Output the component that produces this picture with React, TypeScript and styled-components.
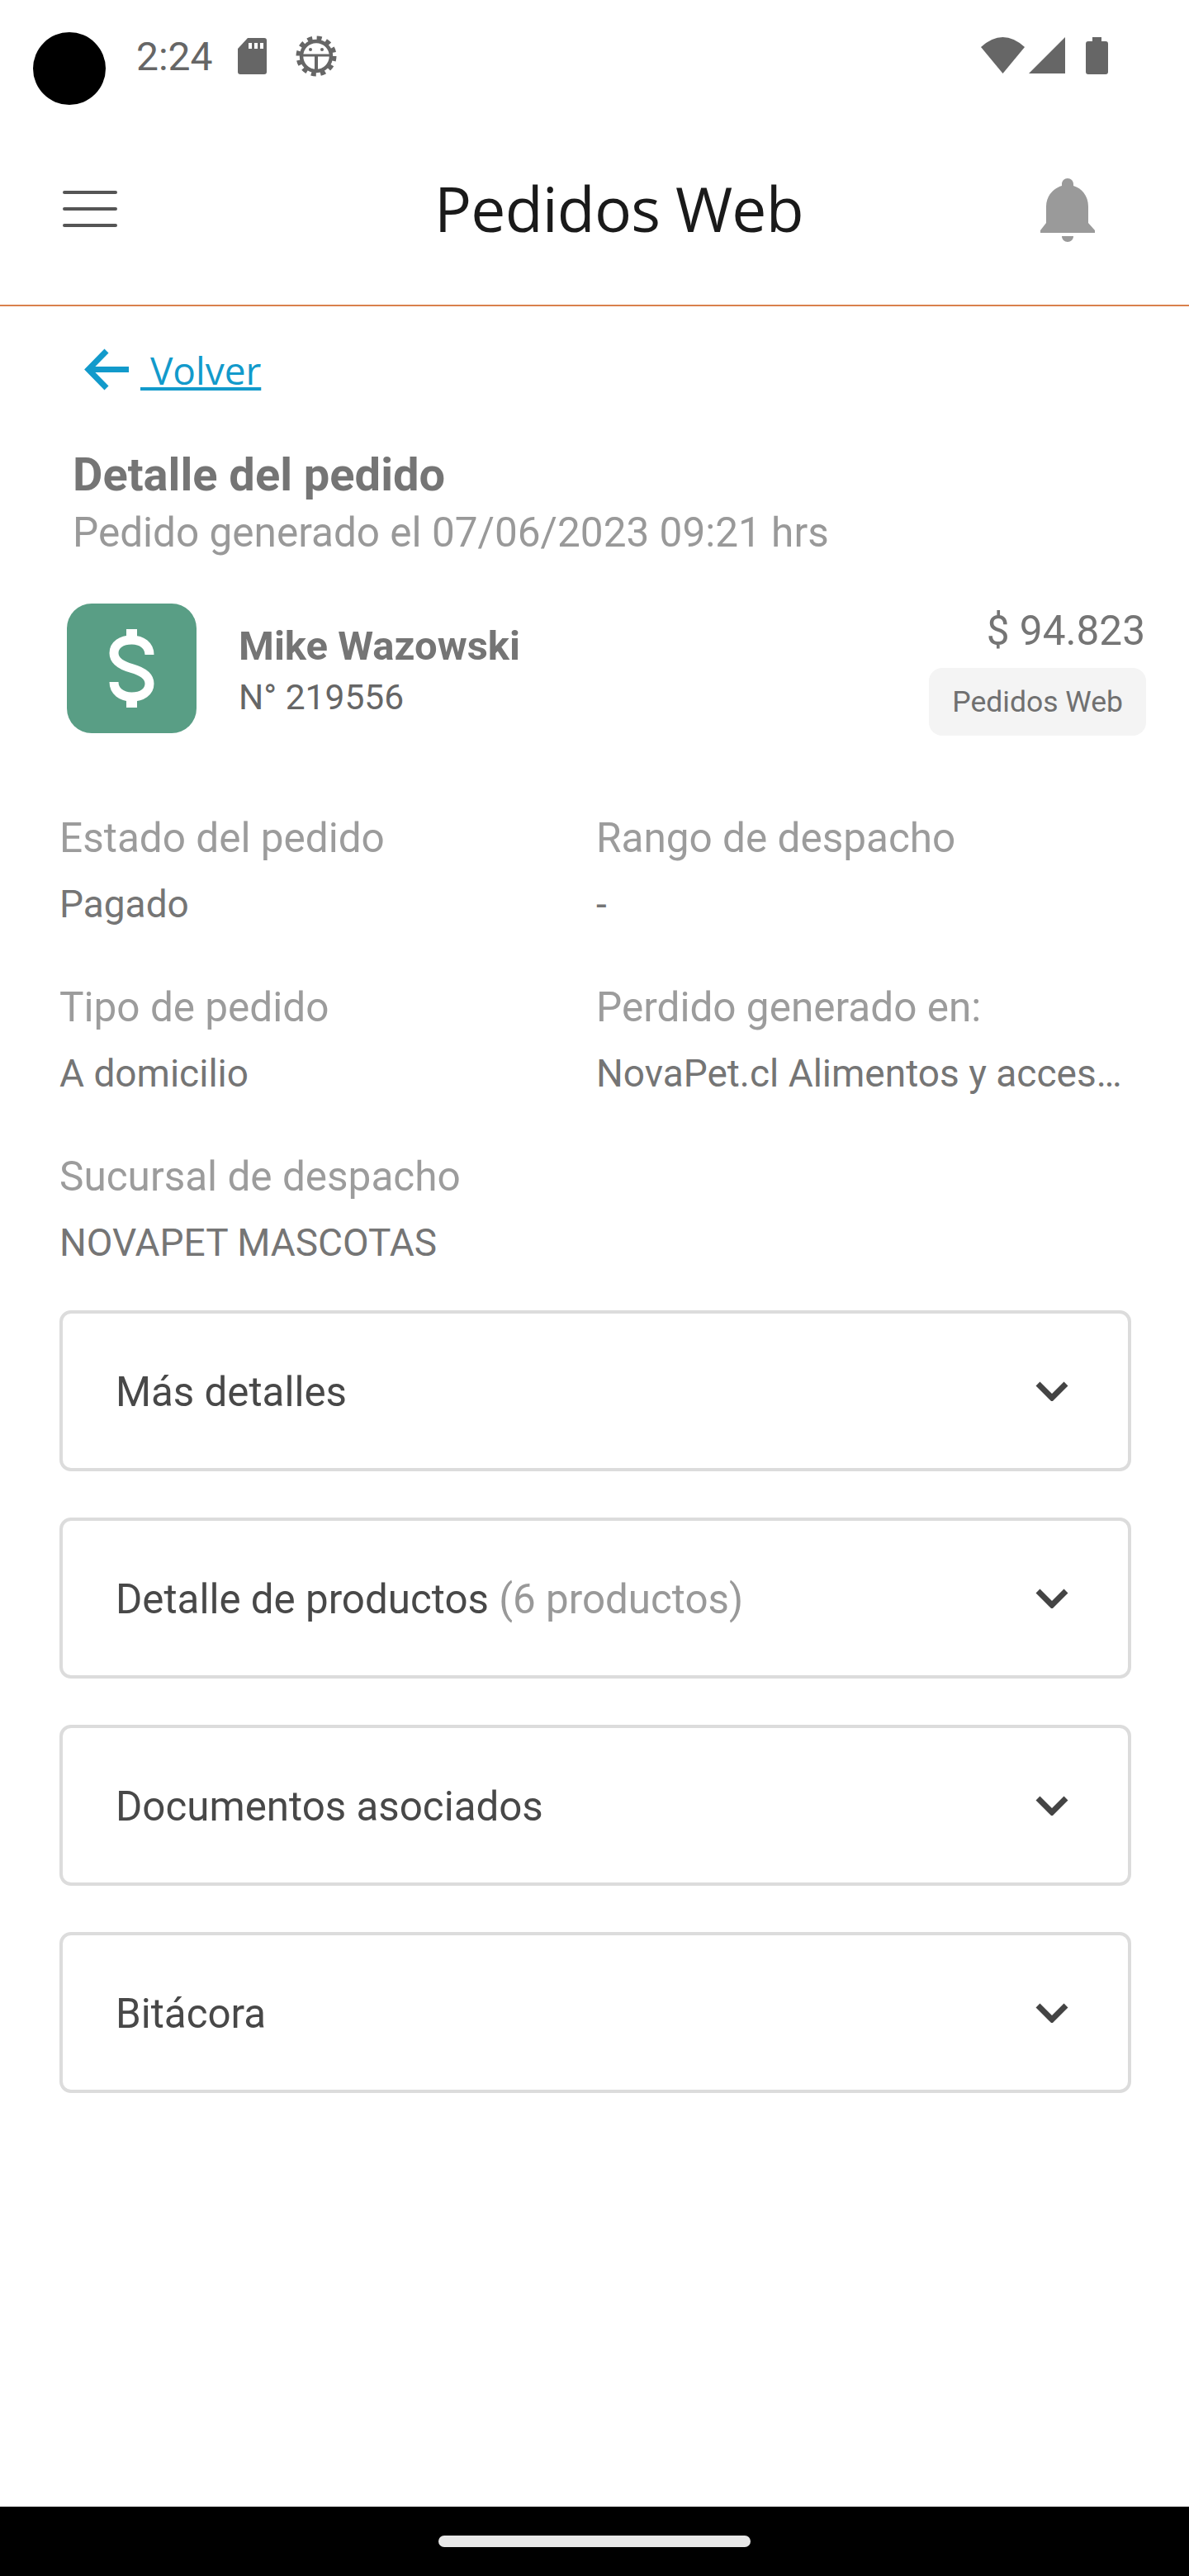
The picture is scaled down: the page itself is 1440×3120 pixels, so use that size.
import React from 'react';
import styled, {createGlobalStyle} from 'styled-components';

const GlobalStyle = createGlobalStyle`
  html, body {
    margin: 0;
    padding: 0;
    background: #fff;
  }

  * {
    box-sizing: border-box;
  }
`

interface InfoItem {
    label: string;
    value: string;
}

const infoItems: InfoItem[] = [
    {label: "Estado del pedido", value: "Pagado"},
    {label: "Rango de despacho", value: "-"},
    {label: "Tipo de pedido", value: "A domicilio"},
    {label: "Perdido generado en:", value: "NovaPet.cl Alimentos y accesorios para mascotas"},
    {label: "Sucursal de despacho", value: "NOVAPET MASCOTAS"},
];

const sections = [
    {title: "Más detalles"},
    {title: "Detalle de productos", extra: "(6 productos)"},
    {title: "Documentos asociados"},
    {title: "Bitácora"},
];

const App = () => {
    return (
        <Page>
            <GlobalStyle/>
            <StatusBar>
                <Camera/>
                <Time>2:24</Time>
                <SdIcon width="35" height="44" viewBox="0 0 35 44">
                    <path fill="#666" d="M12 0H32a3 3 0 0 1 3 3V41a3 3 0 0 1-3 3H3a3 3 0 0 1-3-3V13Z"/>
                    <path fill="#fff" d="M13 6h4v7h-4ZM20 6h4v7h-4ZM27 6h4v7h-4Z"/>
                </SdIcon>
                <DebugIcon width="50" height="50" viewBox="0 0 50 50" fill="none" stroke="#666">
                    <circle cx="25" cy="25" r="22" strokeWidth="5" strokeDasharray="6 5.52"/>
                    <circle cx="25" cy="25" r="18" strokeWidth="4.5"/>
                    <path strokeWidth="3" d="M9 24H41"/>
                    <path strokeWidth="4" d="M25 24V41"/>
                    <circle cx="18" cy="17" r="2" fill="#666" stroke="none"/>
                    <circle cx="32" cy="17" r="2" fill="#666" stroke="none"/>
                </DebugIcon>
                <StatusRight>
                    <svg width="53" height="44" viewBox="0 0 53 44">
                        <path fill="#666" d="M0 12Q26.5-12 53 12L26.5 44Z"/>
                    </svg>
                    <svg width="44" height="44" viewBox="0 0 44 44">
                        <path fill="#666" d="M44 0V44H0Z"/>
                    </svg>
                    <BatteryIcon width="27" height="45" viewBox="0 0 27 45">
                        <path fill="#666" d="M8 0H19V5H24a3 3 0 0 1 3 3V42a3 3 0 0 1-3 3H3a3 3 0 0 1-3-3V8a3 3 0 0 1 3-3H8Z"/>
                    </BatteryIcon>
                </StatusRight>
            </StatusBar>

            <Header>
                <Hamburger>
                    <HamburgerLine/>
                    <HamburgerLine/>
                    <HamburgerLine/>
                </Hamburger>
                <Title>Pedidos Web</Title>
                <BellIcon width="66" height="77" viewBox="0 0 66 77">
                    <path fill="#9a9a9a" d="M33 0c4 0 7 3 7 7v2C50 12 58 21 58 34V54L66 63V66H0V63L7 54V34C7 21 16 12 26 9V7C26 3 29 0 33 0Z"/>
                    <path fill="#9a9a9a" d="M26 70H40C40 74 37 77 33 77S26 74 26 70Z"/>
                </BellIcon>
            </Header>

            <BackRow>
                <svg width="54" height="51" viewBox="0 0 54 51" fill="none" stroke="#129acb" strokeWidth="7">
                    <path d="M27 3L5 25.5L27 48"/>
                    <path d="M6 25.5H54"/>
                </svg>
                <BackLink href="#">&nbsp;Volver</BackLink>
            </BackRow>

            <Heading>
                <HeadingTitle>Detalle del pedido</HeadingTitle>
                <HeadingSubtitle>Pedido generado el 07/06/2023 09:21 hrs</HeadingSubtitle>
            </Heading>

            <OrderRow>
                <OrderIcon>
                    <svg width="55" height="95" viewBox="0 0 55 95" fill="none" stroke="#fff">
                        <path strokeWidth="13" d="M27.5 0V14M27.5 81V95"/>
                        <path strokeWidth="11" d="M49 31C49 20 40 13 27.5 13C15 13 6 19 6 29C6 39 15 44 27.5 47.5C40 51 49 56 49 66C49 76 40 82 27.5 82C15 82 6 75 6 64"/>
                    </svg>
                </OrderIcon>
                <Customer>
                    <CustomerName>Mike Wazowski</CustomerName>
                    <OrderNumber>N° 219556</OrderNumber>
                </Customer>
                <OrderAside>
                    <Price>$ 94.823</Price>
                    <Chip>Pedidos Web</Chip>
                </OrderAside>
            </OrderRow>

            <InfoGrid>
                {infoItems.map(item => (
                    <InfoCell key={item.label}>
                        <InfoLabel>{item.label}</InfoLabel>
                        <InfoValue>{item.value}</InfoValue>
                    </InfoCell>
                ))}
            </InfoGrid>

            <Accordions>
                {sections.map(section => (
                    <Accordion key={section.title}>
                        <AccordionTitle>
                            {section.title}
                            {section.extra && <AccordionExtra> {section.extra}</AccordionExtra>}
                        </AccordionTitle>
                        <svg width="40" height="24" viewBox="0 0 40 24" fill="none" stroke="#444" strokeWidth="7">
                            <path d="M3 3L20 20L37 3"/>
                        </svg>
                    </Accordion>
                ))}
            </Accordions>

            <Spacer/>
            <NavBar>
                <NavPill/>
            </NavBar>
        </Page>
    );
};

export default App;

const Page = styled.div`
  width: 1440px;
  min-height: 3120px;
  display: flex;
  flex-direction: column;
  background: #fff;
  font-family: 'Roboto', sans-serif;
`

const StatusBar = styled.div`
  height: 137px;
  padding: 39px 98px 0 40px;
  display: flex;
  align-items: flex-start;
`

const Camera = styled.div`
  width: 88px;
  height: 88px;
  border-radius: 50%;
  background: #000;
  margin-right: 37px;
`

const Time = styled.div`
  font-size: 48px;
  line-height: 60px;
  color: #666;
  margin-right: 30px;
`

const SdIcon = styled.svg`
  margin-top: 7px;
`

const DebugIcon = styled.svg`
  margin: 4px 0 0 35px;
`

const StatusRight = styled.div`
  margin-left: auto;
  margin-top: 6px;
  display: flex;
  align-items: flex-start;
  gap: 5px;
`

const BatteryIcon = styled.svg`
  margin-left: 20px;
`

const Header = styled.header`
  height: 234px;
  padding: 0 114px 0 76px;
  display: flex;
  align-items: center;
  border-bottom: 2px solid #d9804c;
`

const Hamburger = styled.div`
  width: 66px;
  margin-right: 384px;
  display: flex;
  flex-direction: column;
  gap: 16px;
`

const HamburgerLine = styled.span`
  height: 4px;
  border-radius: 2px;
  background: #555;
`

const Title = styled.h1`
  margin: 0 0 2px;
  font-family: 'Open Sans', sans-serif;
  font-size: 75px;
  line-height: 90px;
  font-weight: 400;
  letter-spacing: -0.8px;
  color: #1a1a1a;
`

const BellIcon = styled.svg`
  margin-left: auto;
  margin-top: 3px;
`

const BackRow = styled.div`
  margin-top: 51px;
  padding-left: 102px;
  display: flex;
  align-items: center;
  height: 51px;
  gap: 14px;
`

const BackLink = styled.a`
  font-family: 'Open Sans', sans-serif;
  font-size: 46px;
  line-height: 60px;
  color: #129acb;
  text-decoration: underline;
`

const Heading = styled.div`
  margin-top: 67px;
  padding-left: 88px;
`

const HeadingTitle = styled.h2`
  margin: 0;
  font-size: 56px;
  line-height: 70px;
  font-weight: 700;
  color: #757575;
`

const HeadingSubtitle = styled.div`
  font-size: 49.5px;
  line-height: 70px;
  color: #999;
`

const OrderRow = styled.div`
  margin-top: 51px;
  padding: 0 52px 0 81px;
  display: flex;
  align-items: flex-start;
`

const OrderIcon = styled.div`
  width: 157px;
  height: 157px;
  border-radius: 30px;
  background: #599e85;
  display: flex;
  align-items: center;
  justify-content: center;
`

const Customer = styled.div`
  margin-left: 51px;
  padding-top: 21px;
`

const CustomerName = styled.div`
  font-size: 49px;
  line-height: 62px;
  font-weight: 700;
  color: #757575;
`

const OrderNumber = styled.div`
  font-size: 42.5px;
  line-height: 62px;
  color: #666;
`

const OrderAside = styled.div`
  margin-left: auto;
  display: flex;
  flex-direction: column;
  align-items: flex-end;
`

const Price = styled.div`
  font-size: 49.5px;
  line-height: 66px;
  color: #757575;
  padding-right: 1px;
`

const Chip = styled.div`
  margin-top: 12px;
  height: 82px;
  padding: 0 28px;
  border-radius: 16px;
  background: #f4f4f4;
  display: flex;
  align-items: center;
  font-size: 35.5px;
  color: #707070;
`

const InfoGrid = styled.div`
  margin-top: 94px;
  padding: 0 70px 0 72px;
  display: grid;
  grid-template-columns: 650px minmax(0, 1fr);
  row-gap: 65px;
`

const InfoCell = styled.div`
  min-width: 0;
`

const InfoLabel = styled.div`
  font-size: 49.5px;
  line-height: 60px;
  color: #9c9c9c;
`

const InfoValue = styled.div`
  margin-top: 20px;
  font-size: 46px;
  line-height: 60px;
  color: #757575;
  white-space: nowrap;
  overflow: hidden;
  text-overflow: ellipsis;
`

const Accordions = styled.div`
  margin-top: 52px;
  padding: 0 70px 0 72px;
  display: flex;
  flex-direction: column;
  gap: 56px;
`

const Accordion = styled.div`
  height: 195px;
  padding: 0 72px 0 64px;
  border: 4px solid #dcdcdc;
  border-radius: 14px;
  display: flex;
  align-items: center;
  justify-content: space-between;
`

const AccordionTitle = styled.div`
  padding-top: 2px;
  font-size: 49.3px;
  line-height: 60px;
  color: #484848;
`

const AccordionExtra = styled.span`
  color: #999;
`

const Spacer = styled.div`
  flex: 1;
`

const NavBar = styled.div`
  height: 84px;
  background: #000;
  padding-top: 35px;
  display: flex;
  justify-content: center;
  align-items: flex-start;
`

const NavPill = styled.div`
  width: 378px;
  height: 14px;
  border-radius: 7px;
  background: #e8e8e8;
`
